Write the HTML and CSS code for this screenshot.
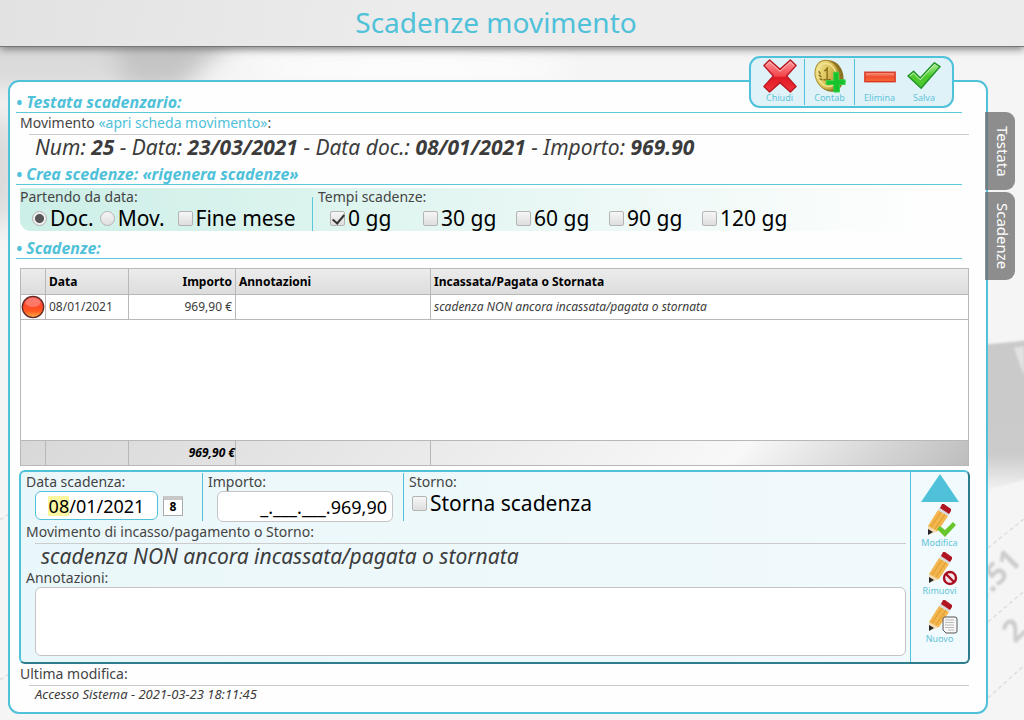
FILE: index.html
```html
<!DOCTYPE html>
<html lang="it">
<head>
<meta charset="utf-8">
<title>Scadenze movimento</title>
<link rel="stylesheet" href="styles.css">
</head>
<body>
<svg class="backdrop" viewBox="0 0 1024 720" preserveAspectRatio="none" aria-hidden="true">
  <defs>
    <filter id="soft" x="-50%" y="-50%" width="200%" height="200%"><feGaussianBlur stdDeviation="12"/></filter>
    <filter id="haze" x="-20%" y="-20%" width="140%" height="140%"><feGaussianBlur stdDeviation="1"/></filter>
    <linearGradient id="shade" x1="0" y1="0" x2="0" y2="1"><stop offset="0" stop-color="#cacaca"/><stop offset=".75" stop-color="#cbcbcb"/><stop offset="1" stop-color="#f4f4f4"/></linearGradient>
  </defs>
  <rect width="1024" height="720" fill="#f5f5f5"/>
  <g filter="url(#soft)">
    <path d="M-30 30H110L130 90H-30Z" fill="#dadada"/>
    <path d="M112 30H240L180 90H124Z" fill="#c4c4c4"/>
    <ellipse cx="0" cy="170" rx="14" ry="60" fill="#d2d2d2"/>
    <ellipse cx="410" cy="68" rx="160" ry="12" fill="#fff"/>
  </g>
  <path d="M980 345L1030 340V478L980 492Z" fill="url(#shade)" filter="url(#haze)"/>
  <path d="M1014 348L1024 346V376Z" fill="#e2e2e2" filter="url(#haze)"/>
  <g stroke="#dedede" stroke-width="1.500" stroke-dasharray="4 3">
    <path d="M988 548L1030 514M988 622L1030 586M988 698L1030 660M0 680L9 674M0 520L9 514"/>
  </g>
  <g fill="#cdcdcd" font-family="Noto Sans" font-weight="700" font-size="31" filter="url(#haze)">
    <text transform="translate(979 606) rotate(-45)">0.51</text>
    <text transform="translate(1015 644) rotate(-45)">2</text>
  </g>
</svg>

<header class="page-header"><h1>Scadenze movimento</h1></header>

<main class="panel">
  <div class="toolbar" role="toolbar">
    <div class="tool-group">
      <button class="tool" type="button">
        <svg class="tool-icon" viewBox="0 0 36 36">
          <defs><linearGradient id="red" x1="0" y1="0" x2="0" y2="1"><stop offset="0" stop-color="#ff9a9a"/><stop offset=".5" stop-color="#f4454c"/><stop offset=".55" stop-color="#e11a24"/><stop offset="1" stop-color="#f0343c"/></linearGradient></defs>
          <path d="M7 1L18 11 29 1 35 7 25 18 35 29 29 35 18 25 7 35 1 29 11 18 1 7Z" fill="url(#red)" stroke="#b81922" stroke-width="1.500" stroke-linejoin="round"/>
          <path d="M3 7L7 3 18 13 29 3 33 7" fill="none" stroke="#ffc4c4" stroke-width="1"/>
        </svg><span>Chiudi</span>
      </button>
    </div>
    <div class="tool-group">
      <button class="tool" type="button">
        <svg class="tool-icon" viewBox="0 0 36 36">
          <defs><linearGradient id="gold" x1="0" y1="0" x2="1" y2="1"><stop offset="0" stop-color="#fbf0a0"/><stop offset=".5" stop-color="#dcc35a"/><stop offset="1" stop-color="#a57d20"/></linearGradient></defs>
          <ellipse cx="18" cy="18" rx="14" ry="17" transform="rotate(-18 18 18)" fill="#8d7424"/>
          <ellipse cx="15" cy="17" rx="12.500" ry="16" transform="rotate(-18 15 17)" fill="url(#gold)" stroke="#a88d30" stroke-width="1"/>
          <ellipse cx="15" cy="17" rx="9.500" ry="12.500" transform="rotate(-18 15 17)" fill="none" stroke="#f3e493" stroke-width="1.500"/>
          <path d="M12 13L15 10V22M11 22H19M6 13L8 16M6 17L9 19M7 21L10 22" fill="none" stroke="#8e7120" stroke-width="1.600"/>
          <path d="M22 14H27V22H34V27H28V35H22V27H14V23H22Z" fill="#18c22c" stroke="#30d544" stroke-width="1"/>
        </svg><span>Contab</span>
      </button>
    </div>
    <div class="tool-group">
      <button class="tool" type="button">
        <svg class="tool-icon" viewBox="0 0 36 36">
          <defs><linearGradient id="bar" x1="0" y1="0" x2="0" y2="1"><stop offset="0" stop-color="#f6a08a"/><stop offset=".5" stop-color="#f04d2e"/><stop offset="1" stop-color="#fb6a38"/></linearGradient></defs>
          <rect x="2" y="14" width="32" height="10" fill="url(#bar)" stroke="#d8351f" stroke-width="1.500"/>
        </svg><span>Elimina</span>
      </button>
      <button class="tool" type="button">
        <svg class="tool-icon" viewBox="0 0 36 36">
          <defs><linearGradient id="green" x1="0" y1="0" x2="0" y2="1"><stop offset="0" stop-color="#b2ef9c"/><stop offset=".5" stop-color="#4fcb2e"/><stop offset="1" stop-color="#49c62c"/></linearGradient></defs>
          <path d="M1 18L7 13 14 20 29 4 35 8 15 31Z" fill="url(#green)" stroke="#1f932a" stroke-width="1.500" stroke-linejoin="round"/>
          <path d="M3 18L7 15 14 22 29 6" fill="none" stroke="#d6f9c8" stroke-width="1"/>
        </svg><span>Salva</span>
      </button>
    </div>
  </div>

  <nav class="side-tabs">
    <button class="side-tab" type="button">Testata</button>
    <button class="side-tab side-tab-tall" type="button">Scadenze</button>
  </nav>

  <section>
    <h2>• Testata scadenzario:</h2>
    <div class="field">
      <div class="label">Movimento <a href="#movimento">«apri scheda movimento»</a>:</div>
      <div class="value">Num: <b>25</b> - Data: <b>23/03/2021</b> - Data doc.: <b>08/01/2021</b> - Importo: <b>969.90</b></div>
    </div>
  </section>

  <section>
    <h2>• Crea scedenze: <a href="#rigenera">«rigenera scadenze»</a></h2>
    <div class="options">
      <fieldset class="option-group option-start">
        <legend class="label">Partendo da data:</legend>
        <div class="choices">
          <label><input type="radio" name="start" checked>Doc.</label>
          <label><input type="radio" name="start">Mov.</label>
          <label class="spaced"><input type="checkbox">Fine mese</label>
        </div>
      </fieldset>
      <fieldset class="option-group option-times">
        <legend class="label">Tempi scadenze:</legend>
        <div class="choices times">
          <label><input type="checkbox" checked>0 gg</label>
          <label><input type="checkbox">30 gg</label>
          <label><input type="checkbox">60 gg</label>
          <label><input type="checkbox">90 gg</label>
          <label><input type="checkbox">120 gg</label>
        </div>
      </fieldset>
    </div>
  </section>

  <section>
    <h2>• Scadenze:</h2>
    <table class="grid">
      <colgroup><col class="c-state"><col class="c-date"><col class="c-amount"><col class="c-notes"><col></colgroup>
      <thead><tr><th></th><th>Data</th><th class="num">Importo</th><th>Annotazioni</th><th>Incassata/Pagata o Stornata</th></tr></thead>
      <tbody>
        <tr class="row"><td class="state"><svg class="led" viewBox="0 0 24 24"><defs><linearGradient id="led" x1="0" y1="0" x2="0" y2="1"><stop offset="0" stop-color="#ff5a50"/><stop offset=".45" stop-color="#ff4a28"/><stop offset=".7" stop-color="#ff5a20"/><stop offset="1" stop-color="#ffb54a"/></linearGradient></defs><circle cx="12" cy="12" r="10.700" fill="url(#led)" stroke="#5e2a2a" stroke-width="1.300"/><ellipse cx="12" cy="7.500" rx="7.500" ry="4.500" fill="#ff9a92" opacity=".55"/></svg></td><td>08/01/2021</td><td class="num">969,90 €</td><td></td><td class="note">scadenza NON ancora incassata/pagata o stornata</td></tr>
        <tr class="filler"><td colspan="5"></td></tr>
      </tbody>
      <tfoot><tr><td></td><td></td><td class="num total">969,90 €</td><td></td><td></td></tr></tfoot>
    </table>
  </section>

  <form class="editor">
    <div class="editor-main">
      <div class="editor-row">
        <div class="cell cell-date">
          <label class="label" for="due">Data scadenza:</label>
          <div class="date-line">
            <input id="due" class="box date-box" type="text" value="08/01/2021">
            <button class="calendar" type="button" aria-label="Calendario">8</button>
          </div>
        </div>
        <div class="cell cell-amount">
          <label class="label" for="amount">Importo:</label>
          <input id="amount" class="box amount-box" type="text" value="_.___.___.969,90">
        </div>
        <div class="cell cell-storno">
          <div class="label">Storno:</div>
          <div class="choices storno"><label><input type="checkbox">Storna scadenza</label></div>
        </div>
      </div>
      <div class="label movement">Movimento di incasso/pagamento o Storno:</div>
      <div class="value">scadenza NON ancora incassata/pagata o stornata</div>
      <label class="label" for="notes">Annotazioni:</label>
      <textarea id="notes" class="box notes"></textarea>
    </div>
    <div class="editor-side">
      <button class="up" type="button" aria-label="Su"><svg viewBox="0 0 38 28"><path d="M19 0L38 28H0Z" fill="#4fc1d9"/></svg></button>
      <button class="pen" type="button">
        <svg viewBox="0 0 32 34">
          <g id="pencil"><path d="M5 23L15 7 25 13 15 28 5 31Z" fill="#f3b54c"/><path d="M8 24L18 9M12 26L22 11" stroke="#dc9a34" stroke-width="1"/><path d="M15 7L17 4 27 10 25 13Z" fill="#d9d9dc"/><path d="M17 5L19 1 21 1 28 6V8L26 11Z" fill="#b01522"/><path d="M5 23L14 28 5 32Z" fill="#f4dcb0"/><path d="M5 26L10 29 5 32Z" fill="#262626"/></g>
          <path d="M14 26L17 23 22 27 30 19 33 22 22 34Z" fill="#66c62c"/>
        </svg><span>Modifica</span>
      </button>
      <button class="pen" type="button">
        <svg viewBox="0 0 32 34"><use href="#pencil"/><circle cx="26" cy="27" r="6" fill="#f3e5e8" stroke="#a90f20" stroke-width="2.400"/><path d="M22 23L30 31" stroke="#a90f20" stroke-width="2.400"/></svg><span>Rimuovi</span>
      </button>
      <button class="pen" type="button">
        <svg viewBox="0 0 32 34"><use href="#pencil"/><path d="M21 18H31Q33 18 33 20V32Q33 34 31 34H22L19 31V20Q19 18 21 18Z" fill="#f7f7f7" stroke="#555" stroke-width="1"/><path d="M21 21H30M21 23.500H30M21 26H30M21 28.500H30M24 31H30" stroke="#bbb" stroke-width="1"/></svg><span>Nuovo</span>
      </button>
    </div>
  </form>

  <footer class="field">
    <div class="label">Ultima modifica:</div>
    <div class="value small">Accesso Sistema - 2021-03-23 18:11:45</div>
  </footer>
</main>
</body>
</html>
```
FILE: styles.css
```css
* { box-sizing: border-box; }
body { margin: 0; min-height: 100vh; font-family: "Noto Sans", "Open Sans", sans-serif; color: #3c3c3c; }
button { font: inherit; padding: 0; border: 0; background: none; color: #62c4da; cursor: pointer; }
a { color: #4fc1d9; text-decoration: none; }
svg { display: block; }
.backdrop { position: absolute; inset: 0; width: 100%; height: 100%; z-index: -1; }

.page-header { height: 47px; padding-right: 32px; background: linear-gradient(100deg, #e2e2e2, #ececec 40%, #ececec); border-bottom: 1px solid #777; box-shadow: 0 2px 8px #777; text-align: center; }
h1 { margin: 0; font-size: 28px; line-height: 44px; font-weight: 400; color: #4fc1d9; }

.panel { position: relative; margin: 33px 36px 6px 8px; padding: 10px 17px 9px 10px; border: 2px solid #4fc1d9; border-radius: 11px; background: #fefefe; }

.toolbar { position: absolute; top: -26px; right: 32px; height: 52px; display: flex; padding: 1px 8px 1px 4px; border: 2px solid #4fc1d9; border-radius: 11px; background: #dff2f7; }
.tool-group { display: flex; }
.tool-group + .tool-group { border-left: 1px solid #4fc1d9; }
.tool { width: 49px; height: 46px; display: flex; flex-direction: column; align-items: center; }
.tool + .tool { width: 40px; }
.tool-icon { width: 34px; height: 34px; flex: none; }
.tool span { font-size: 9px; line-height: 10px; }

.side-tabs { position: absolute; top: 30px; left: calc(100% - 1px); display: flex; flex-direction: column; gap: 2px; }
.side-tab { width: 30px; height: 78px; padding-left: 5px; writing-mode: vertical-rl; border-radius: 0 9px 9px 0; background: rgba(112, 112, 112, .78); color: #fff; font-size: 15px; line-height: 20px; text-align: center; }
.side-tab-tall { height: 88px; }

h2 { margin: 0 7px 0 -4px; font-size: 16px; line-height: 20px; font-weight: 700; font-style: italic; color: #4fc1d9; border-bottom: 1px solid #5cc8dc; }
.label { display: block; padding: 0; font-size: 14px; line-height: 18px; color: #444; }
.field .label { padding: 1px 0 2px; }
.value { margin-left: 9px; padding-left: 6px; border-top: 1px solid #ccc; font-size: 21px; line-height: 25px; font-style: italic; }
.value.small { font-size: 13px; line-height: 17px; }
section { padding-bottom: 4px; }

.options { display: flex; margin: 3px 0; background: linear-gradient(90deg, #ccefe7, #fefefe 96%); border-bottom-left-radius: 11px; }
fieldset { min-width: 0; margin: 0; padding: 0; border: 0; }
.option-group { height: 43px; }
.option-start { width: 292px; }
.option-times { flex: 1; padding-left: 5px; border-left: 1px solid #5cc8dc; }
.choices { display: flex; padding-left: 12px; font-size: 21px; line-height: 25px; color: #000; }
.choices label { display: flex; align-items: center; gap: 3px; margin-right: 6px; white-space: nowrap; }
.choices .spaced { margin-left: 7px; }
.choices .times label, .times label { width: 93px; margin-right: 0; }
input[type=checkbox], input[type=radio] { appearance: none; flex: none; width: 15px; height: 15px; margin: 0; border: 1px solid #b4b4b4; border-radius: 2px; background: linear-gradient(#f6f6f6, #dedede); }
input[type=radio] { border-radius: 50%; }
input[type=radio]:checked { background: radial-gradient(circle, #555 0 4px, #eee 5px); }
input[type=checkbox]:checked { position: relative; }
input[type=checkbox]:checked::after { content: ""; position: absolute; left: 4px; top: 0; width: 5px; height: 10px; border: solid #333; border-width: 0 2px 2px 0; transform: rotate(40deg); }

.grid { width: 100%; margin-top: 9px; table-layout: fixed; border-collapse: collapse; border: 1px solid #bbb; background: #fff; font-size: 12px; line-height: 16px; }
.c-state { width: 25px; } .c-date { width: 83px; } .c-amount { width: 107px; } .c-notes { width: 195px; }
.grid th, .grid td { padding: 0 3px; border: 1px solid #b8b8b8; text-align: left; white-space: nowrap; }
.grid thead tr { height: 26px; background: linear-gradient(#ececec, #dcdcdc); color: #000; }
.grid th { font-size: 12px; }
.grid .num { text-align: right; }
.grid .row { height: 25px; }
.grid .state { padding: 0; }
.led { width: 24px; height: 24px; }
.filler { height: 121px; }
.grid tfoot tr { height: 25px; background: linear-gradient(135deg, #d8d8d8, #f8f8f8 75%, #bcbcbc); }
.grid .total { padding-right: 0; font-weight: 700; font-style: italic; color: #000; }
.grid .note { font-style: italic; }

.editor { display: flex; margin: 0 -1px; border: 2px solid #4fc1d9; border-right-color: #2e7d8c; border-bottom-color: #2e7d8c; border-radius: 6px; background: linear-gradient(90deg, #eaf7fa, #f1fafc); }
.editor-main { flex: 1; padding: 1px 4px 6px 5px; }
.editor-row { display: flex; height: 50px; }
.cell { height: 48px; }
.cell + .cell { padding-left: 5px; border-left: 1px solid #4fc1d9; }
.cell-date { width: 176px; }
.cell-amount { width: 201px; }
.date-line { display: flex; align-items: center; gap: 5px; }
.box { margin: 0 0 0 9px; padding: 0 5px; border: 1px solid #c4c4c4; border-radius: 6px; background: #fff; color: #000; font-family: inherit; font-size: 18px; }
.date-box { width: 123px; height: 29px; border-color: #4fc1d9; text-align: center; background: linear-gradient(#fbf7a0, #fbf7a0) 12px 50% / 21px 20px no-repeat #fff; }
.calendar { width: 20px; height: 20px; border: 1px solid #aaa; border-top: 4px solid #c8c8c8; background: #fff; color: #000; font-size: 12px; font-weight: 700; line-height: 14px; }
.amount-box { width: 176px; height: 31px; text-align: right; }
.choices.storno { padding-left: 3px; }
.movement { padding-bottom: 2px; }
.notes { display: block; width: calc(100% - 9px); height: 69px; resize: none; }
.editor-side { width: 58px; display: flex; flex-direction: column; align-items: center; border-left: 1px solid #4fc1d9; }
.up svg { width: 38px; height: 28px; }
.up { margin: 2px 0 1px; }
.pen { height: 48px; display: flex; flex-direction: column; align-items: center; }
.pen svg { width: 32px; height: 34px; overflow: visible; }
.pen span { font-size: 9px; line-height: 11px; }
```
